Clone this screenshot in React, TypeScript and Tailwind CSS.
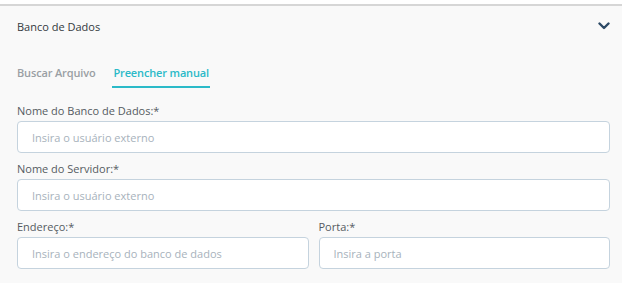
import React from "react";

function Field({ label, placeholder }: { label: string; placeholder: string }) {
  return (
    <div className="flex flex-col">
      <label className="text-[11px] leading-[16px] text-[#555b61] h-[16px]">{label}</label>
      <input
        readOnly
        placeholder={placeholder}
        className="mt-[2px] h-[32px] w-full rounded-[4px] border border-[#c5d3de] bg-white px-[14px] text-[11px] text-[#333] placeholder:text-[#a7b2bc] outline-none"
      />
    </div>
  );
}

export default function App() {
  return (
    <div
      className="w-[622px] h-[283px] bg-white pt-[4px] overflow-hidden"
      style={{ fontFamily: '"Open Sans", "Noto Sans", sans-serif' }}
    >
      <div className="h-full border-t-2 border-[#d6d6d6] bg-[#f9f9f9] pl-[17px] pr-[12px]">
        <div className="flex items-center justify-between h-[42px]">
          <span className="text-[11px] text-[#333a40]">Banco de Dados</span>
          <svg width="12" height="8" viewBox="0 0 12 8" className="-mt-[2px]">
            <path d="M1.5 1.5 L6 6 L10.5 1.5" fill="none" stroke="#2d4a66" strokeWidth="2.4" strokeLinecap="round" strokeLinejoin="round" />
          </svg>
        </div>
        <div className="flex items-end gap-[17px] h-[40px] text-[11px] font-semibold tracking-[-0.15px]">
          <span className="text-[#9a9fa4] pb-[7px]">Buscar Arquivo</span>
          <span className="text-[#2bbac8] border-b-2 border-[#2bbac8] pb-[5px] px-[1px]">Preencher manual</span>
        </div>
        <div className="mt-[15px] flex flex-col gap-[8px]">
          <Field label="Nome do Banco de Dados:*" placeholder="Insira o usuário externo" />
          <Field label="Nome do Servidor:*" placeholder="Insira o usuário externo" />
          <div className="grid grid-cols-2 gap-[10px]">
            <Field label="Endereço:*" placeholder="Insira o endereço do banco de dados" />
            <Field label="Porta:*" placeholder="Insira a porta" />
          </div>
        </div>
      </div>
    </div>
  );
}
